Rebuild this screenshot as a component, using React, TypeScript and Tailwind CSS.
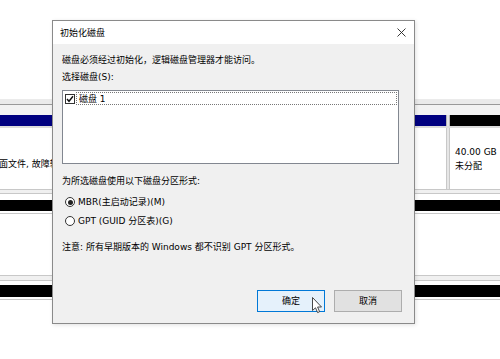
import React from "react";

const F = "font-['DejaVu_Sans','Noto_Sans_CJK_SC',sans-serif]";

function Background() {
  return (
    <div className={`w-[500px] h-[359px] bg-white flex flex-col text-[9px] text-black ${F}`}>
      <div className="h-[99px] shrink-0 bg-white" />
      <div className="h-[5px] shrink-0 bg-[#ebebeb]" />
      <div className="h-[1px] shrink-0 bg-[#9a9a9a]" />
      <div className="h-[10px] shrink-0 bg-[#f3f3f3]" />
      {/* header bars */}
      <div className="h-[11px] shrink-0 flex">
        <div className="w-[446px] bg-[#000080]" />
        <div className="w-[4px] bg-[#e6e6e6] border-x border-[#b5b5b5]" />
        <div className="flex-1 bg-black" />
      </div>
      {/* cells */}
      <div className="h-[63px] shrink-0 flex border-t-2 border-[#dcdcdc]">
        <div className="w-[446px] bg-white flex items-center pt-[11px]">
          <span className="leading-[12px] -ml-[1px]">面文件, 故障转储, 主分区)</span>
        </div>
        <div className="w-[4px] bg-[#e6e6e6] border-x border-[#c8c8c8]" />
        <div className="flex-1 bg-white flex flex-col pl-[5px] pt-[17px]">
          <span className="leading-[14px]">40.00 GB</span>
          <span className="leading-[14px]">未分配</span>
        </div>
      </div>
      <div className="h-[1px] shrink-0 bg-[#c8c8c8]" />
      <div className="h-[3px] shrink-0 bg-[#f0f0f0]" />
      <div className="h-[1px] shrink-0 bg-[#c8c8c8]" />
      <div className="h-[6px] shrink-0 bg-white" />
      <div className="h-[11px] shrink-0 bg-black" />
      <div className="h-[2px] shrink-0 bg-white" />
      <div className="h-[1px] shrink-0 bg-[#c8c8c8]" />
      <div className="h-[61px] shrink-0 bg-white" />
      <div className="h-[1px] shrink-0 bg-[#c8c8c8]" />
      <div className="h-[4px] shrink-0 bg-[#f0f0f0]" />
      <div className="h-[1px] shrink-0 bg-[#c8c8c8]" />
      <div className="h-[4px] shrink-0 bg-white" />
      <div className="h-[12px] shrink-0 bg-black" />
      <div className="h-[2px] shrink-0 bg-white" />
      <div className="h-[1px] shrink-0 bg-[#c8c8c8]" />
      <div className="flex-1 bg-white" />
    </div>
  );
}

function Radio({ checked }: { checked?: boolean }) {
  return (
    <span className="w-[10px] h-[10px] rounded-full border border-[#333] bg-white flex items-center justify-center shrink-0">
      {checked && <span className="w-[5px] h-[5px] rounded-full bg-[#222]" />}
    </span>
  );
}

function Dialog() {
  return (
    <div className={`absolute left-[52px] top-[20px] w-[363px] h-[304px] border border-[#8a8a8a] bg-[#f0f0f0] flex flex-col text-[9px] text-black ${F} shadow-[1px_1px_4px_rgba(0,0,0,0.12)]`}>
      <div className="h-[23px] shrink-0 bg-white flex items-center justify-between pl-[7px] pr-[8px]">
        <span className="leading-[12px]">初始化磁盘</span>
        <svg width="9" height="9" viewBox="0 0 9 9">
          <path d="M0.5 0.5 L8.5 8.5 M8.5 0.5 L0.5 8.5" stroke="#222" strokeWidth="0.9" />
        </svg>
      </div>
      <div className="flex-1 flex flex-col pl-[9px]">
        <div className="mt-[10px] h-[12px] leading-[12px]">磁盘必须经过初始化，逻辑磁盘管理器才能访问。</div>
        <div className="mt-[5px] h-[12px] leading-[12px]">选择磁盘(S):</div>
        <div className="mt-[7px] w-[337px] h-[74px] bg-white border border-[#828790] pt-[1px] pl-[1px] pr-[1px]">
          <div className="flex items-center h-[13px]">
            <span className="w-[10px] h-[10px] ml-[1px] border border-[#333] bg-white flex items-center justify-center shrink-0">
              <svg width="8" height="8" viewBox="0 0 8 8">
                <path d="M1 4 L3 6.3 L7 1.2" stroke="#111" strokeWidth="1.4" fill="none" />
              </svg>
            </span>
            <div className="ml-[1px] flex-1 h-[13px] border border-dotted border-[#777] flex items-center pl-[2px]">
              <span className="leading-[12px]">磁盘 1</span>
            </div>
          </div>
        </div>
        <div className="mt-[11px] h-[12px] leading-[12px]">为所选磁盘使用以下磁盘分区形式:</div>
        <div className="mt-[8px] h-[14px] flex items-center gap-[3px] pl-[3px]">
          <Radio checked />
          <span className="leading-[12px]">MBR(主启动记录)(M)</span>
        </div>
        <div className="mt-[5px] h-[14px] flex items-center gap-[3px] pl-[3px]">
          <Radio />
          <span className="leading-[12px]">GPT (GUID 分区表)(G)</span>
        </div>
        <div className="mt-[13px] h-[12px] leading-[12px]">注意: 所有早期版本的 Windows 都不识别 GPT 分区形式。</div>
        <div className="mt-[37px] flex justify-end gap-[9px] pr-[12px]">
          <div className="relative w-[68px] h-[22px] border border-[#0078d7] bg-[#e5f1fb] flex items-center justify-center">
            <span className="leading-[12px]">确定</span>
          </div>
          <div className="w-[68px] h-[22px] border border-[#adadad] bg-[#e1e1e1] flex items-center justify-center">
            <span className="leading-[12px]">取消</span>
          </div>
        </div>
      </div>
    </div>
  );
}

function Cursor() {
  return (
    <svg className="absolute left-[312px] top-[297px]" width="12" height="18" viewBox="0 0 12 18">
      <path
        d="M0.5 0.5 L0.5 13.5 L3.5 10.8 L5.6 15.6 L7.6 14.7 L5.6 10 L9.5 10 Z"
        fill="white"
        stroke="#333"
        strokeWidth="0.9"
        strokeLinejoin="round"
      />
    </svg>
  );
}

export default function App() {
  return (
    <div className="relative w-[500px] h-[359px] overflow-hidden">
      <Background />
      <Dialog />
      <Cursor />
    </div>
  );
}
